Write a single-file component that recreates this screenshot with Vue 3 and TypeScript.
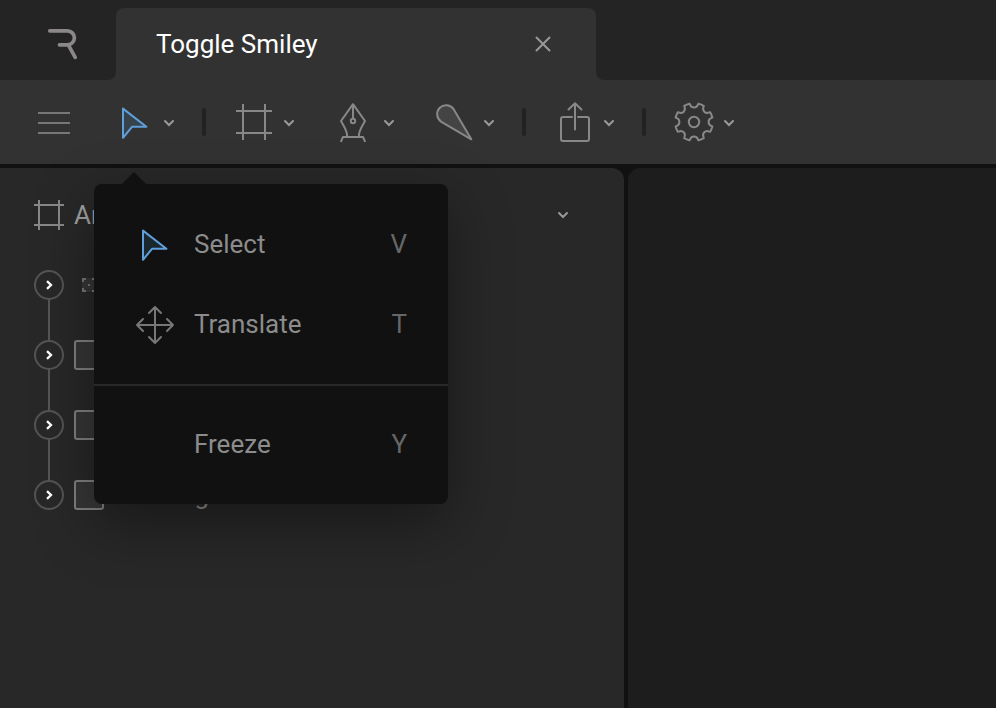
<script setup lang="ts">
interface TreeRow {
  kind: 'group' | 'shape'
  label?: string
}

interface Tool {
  icon: 'cursor' | 'frame' | 'pen' | 'bone' | 'export' | 'gear'
  divided?: boolean
}

const tools: Tool[] = [
  { icon: 'cursor', divided: true },
  { icon: 'frame' },
  { icon: 'pen' },
  { icon: 'bone', divided: true },
  { icon: 'export', divided: true },
  { icon: 'gear' },
]

const rows: TreeRow[] = [
  { kind: 'group' },
  { kind: 'shape' },
  { kind: 'shape' },
  { kind: 'shape', label: 'Rectangle' },
]

// Eight-toothed gear with rounded notches, centred in a 40px box
function gearPath(): string {
  const point = (deg: number, r: number): string => {
    const a = (deg * Math.PI) / 180
    return `${(20 + r * Math.sin(a)).toFixed(2)} ${(20 - r * Math.cos(a)).toFixed(2)}`
  }
  let d = `M${point(-14, 18.9)}`
  for (let k = 0; k < 8; k++) {
    const c = k * 45
    d += `L${point(c - 12.5, 17.6)}A4.1 4.1 0 0 0 ${point(c + 12.5, 17.6)}L${point(c + 14, 18.9)}`
    d += `A19 19 0 0 1 ${point(c + 31, 18.9)}`
  }
  return d + 'Z'
}
const gear = gearPath()
</script>

<template>
  <div class="app">
    <header class="tabs">
      <div class="brand">
        <svg class="logo" width="32" height="34" viewBox="0 0 32 34">
          <path d="M3.8 4.8H21.4a7 7 0 0 1 0 14H13.5M22.3 18.8L29.2 31.3" />
        </svg>
      </div>
      <div class="tab">
        <span>Toggle Smiley</span>
        <svg class="close" width="16" height="16" viewBox="0 0 16 16">
          <path d="M1.5 1.5L14.5 14.5M14.5 1.5L1.5 14.5" />
        </svg>
      </div>
      <div class="rest"></div>
    </header>

    <nav class="toolbar">
      <svg class="icon thin" width="40" height="40" viewBox="0 0 40 40">
        <path d="M4 11H36M4 21H36M4 31H36" />
      </svg>
      <div class="tools">
        <template v-for="tool in tools" :key="tool.icon">
          <div class="tool">
            <svg class="icon" :class="tool.icon" width="40" height="40" viewBox="0 0 40 40">
              <path v-if="tool.icon === 'cursor'" d="M9 6.6L32.4 24.8H18L9 35.8Z" />
              <path v-else-if="tool.icon === 'frame'" d="M9 2V38M31 2V38M2 9H38M2 31H38" />
              <template v-else-if="tool.icon === 'pen'">
                <path d="M13.2 35C13.6 29 9.5 24 7 19L19 2.2L31 19C28.5 24 24.4 29 24.8 35M6.8 39.8L9 35H29L31.2 39.8M19 2.5V16.5" />
                <circle cx="19" cy="19" r="2.2" />
              </template>
              <path v-else-if="tool.icon === 'bone'" d="M37.3 37.3L7.4 19.8A9 9 0 1 1 19.8 7.4Z" />
              <path
                v-else-if="tool.icon === 'export'"
                d="M18 15H9a2 2 0 0 0-2 2V37a2 2 0 0 0 2 2H33a2 2 0 0 0 2-2V17a2 2 0 0 0-2-2H24M21 27.5V1.5M14.5 7.5L21 1.2L27.5 7.5"
              />
              <template v-else>
                <path :d="gear" />
                <circle cx="20" cy="20" r="5.2" />
              </template>
            </svg>
            <svg class="chevron" width="30" height="40" viewBox="0 0 30 40">
              <path d="M11 19L15 23L19 19" />
            </svg>
          </div>
          <span v-if="tool.divided" class="divider"></span>
        </template>
      </div>
    </nav>

    <main class="workspace">
      <aside class="hierarchy">
        <div class="artboard">
          <svg class="icon" width="30" height="30" viewBox="0 0 30 30">
            <path d="M5 0V30M25 0V30M0 5H30M0 25H30" />
          </svg>
          <span class="name">Artboard</span>
          <svg class="chevron" width="30" height="40" viewBox="0 0 30 40">
            <path d="M11 18L15 22L19 18" />
          </svg>
        </div>
        <div class="tree">
          <div v-for="(row, i) in rows" :key="i" class="row">
            <span class="expander">
              <svg width="30" height="30" viewBox="0 0 30 30">
                <circle cx="15" cy="15" r="14" />
                <path d="M13 11.2L17 15L13 18.8" />
              </svg>
            </span>
            <svg v-if="row.kind === 'group'" class="group" width="30" height="30" viewBox="0 0 30 30">
              <rect x="8" y="8" width="14" height="14" />
              <path d="M9 12V9H12M18 9H21V12M21 18V21H18M12 21H9V18M14 15H16" />
            </svg>
            <span v-else class="shape"></span>
            <span v-if="row.label" class="label">{{ row.label }}</span>
          </div>
        </div>
      </aside>
      <section class="stage"></section>
    </main>

    <div class="menu">
      <div class="section">
        <div class="item">
          <svg class="icon cursor" width="40" height="40" viewBox="0 0 40 40">
            <path d="M9 6.6L32.4 24.8H18L9 35.8Z" />
          </svg>
          <span>Select</span>
          <kbd>V</kbd>
        </div>
        <div class="item">
          <svg class="icon move" width="40" height="40" viewBox="0 0 40 40">
            <path d="M21 3V39M3 21H39M15 9L21 3L27 9M15 33L21 39L27 33M9 15L3 21L9 27M33 15L39 21L33 27" />
          </svg>
          <span>Translate</span>
          <kbd>T</kbd>
        </div>
      </div>
      <div class="section">
        <div class="item">
          <i class="blank"></i>
          <span>Freeze</span>
          <kbd>Y</kbd>
        </div>
      </div>
    </div>
  </div>
</template>

<style>
body {
  background: #111;
  overflow: hidden;
}
</style>

<style scoped>
.app {
  position: relative;
  display: flex;
  flex-direction: column;
  height: 708px;
  overflow: hidden;
  font-family: Roboto, sans-serif;
  font-size: 26px;
  line-height: 40px;
  color: #8c8c8c;
}

svg {
  display: block;
  flex: none;
  fill: none;
  stroke: #888;
  stroke-width: 2;
  overflow: visible;
}

.tabs {
  display: flex;
  height: 80px;
  background: #323232;
}

.brand {
  box-sizing: border-box;
  width: 116px;
  padding: 26px 0 0 46px;
  background: #242424;
  border-bottom-right-radius: 8px;
}

.logo {
  stroke: #8c8888;
  stroke-width: 3.7;
  stroke-linecap: round;
}

.tab {
  display: flex;
  align-items: center;
  justify-content: space-between;
  box-sizing: border-box;
  width: 480px;
  padding: 8px 45px 0 40px;
  background: linear-gradient(#242424, #242424) top / 100% 20px no-repeat, #323232;
  color: #fff;
  position: relative;
  isolation: isolate;
}

.tab::before {
  content: '';
  position: absolute;
  z-index: -1;
  inset: 8px 0 0;
  background: #323232;
  border-radius: 8px 8px 0 0;
}

.close {
  stroke: #999;
  stroke-linecap: round;
}

.rest {
  flex: 1;
  background: #242424;
  border-bottom-left-radius: 8px;
}

.toolbar {
  display: flex;
  align-items: center;
  gap: 40px;
  height: 84px;
  padding-left: 34px;
  background: #323232;
}

.tools {
  display: flex;
  align-items: center;
}

.tool {
  display: flex;
  margin-right: 30px;
}

.thin {
  stroke: #777;
}

.pen,
.bone,
.export,
.move {
  stroke-linejoin: round;
}

.bone {
  fill: #444;
}

.move {
  stroke: #777;
  stroke-linecap: round;
}

.export {
  stroke-linecap: round;
}

.cursor {
  stroke: #5fa0dc;
  stroke-linejoin: round;
  fill: rgba(87, 165, 224, 0.15);
}

.chevron {
  stroke: #999;
  stroke-linecap: round;
}

.divider {
  width: 4px;
  height: 28px;
  margin: 0 28px 0 -12px;
  border-radius: 2px;
  background: #222;
}

.workspace {
  display: flex;
  flex: 1;
  gap: 4px;
  padding-top: 4px;
  background: #111;
}

.hierarchy {
  box-sizing: border-box;
  width: 624px;
  padding: 27px 46px 0 34px;
  background: #282828;
  border-top-right-radius: 12px;
}

.stage {
  flex: 1;
  background: #1d1d1d;
  border-top-left-radius: 12px;
}

.artboard {
  display: flex;
  align-items: center;
  height: 40px;
}

.name {
  flex: 1;
  margin-left: 10px;
  color: #a0a0a0;
}

.tree {
  display: flex;
  flex-direction: column;
  gap: 40px;
  padding-top: 35px;
  background: linear-gradient(#555, #555) 14px 50px / 2px 210px no-repeat;
}

.row {
  display: flex;
  align-items: center;
  gap: 10px;
  height: 30px;
}

.expander circle {
  fill: #282828;
  stroke: #555;
}

.expander path {
  stroke: #fff;
  stroke-width: 2.3;
}

.shape {
  box-sizing: border-box;
  width: 30px;
  height: 30px;
  border: 2px solid #808080;
  border-radius: 3px;
  background: #363636;
}

.group {
  stroke: #777;
}

.group rect {
  fill: #363636;
  stroke: none;
}

.menu {
  position: absolute;
  left: 94px;
  top: 184px;
  width: 354px;
  height: 320px;
  border-radius: 8px;
  background: #111;
  box-shadow: 0 20px 60px rgba(0, 0, 0, 0.4);
}

.menu::before {
  content: '';
  position: absolute;
  left: 28px;
  top: -12px;
  width: 24px;
  height: 12px;
  background: #111;
  clip-path: polygon(50% 0, 100% 100%, 0 100%);
}

.section {
  padding: 20px 0;
}

.section + .section {
  padding-top: 18px;
  border-top: 2px solid #282828;
}

.item {
  display: flex;
  align-items: center;
  height: 80px;
  padding: 0 41px 0 40px;
}

.item span {
  flex: 1;
  margin-left: 20px;
}

.blank {
  width: 40px;
}

kbd {
  font-family: inherit;
  color: #666;
}
</style>
